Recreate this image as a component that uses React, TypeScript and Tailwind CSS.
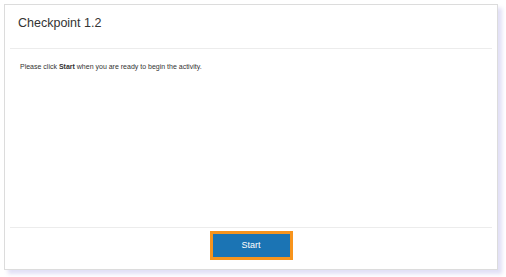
import React from "react";

export default function App() {
  return (
    <div className="w-[506px] h-[277px] bg-white pt-[4px] pl-[4px]" style={{ fontFamily: '"Liberation Sans", Arial, sans-serif' }}>
      <div className="w-[494px] h-[266px] border border-[#dcdcdc] bg-white shadow-[4px_4px_4px_rgba(120,110,210,0.22)] flex flex-col">
        <div className="h-[43px] pt-[11px] pl-[13px]">
          <h1 className="text-[12.5px] leading-[15px] text-[#333]">Checkpoint 1.2</h1>
        </div>
        <div className="mx-[5px] h-px bg-[#ececec]" />
        <div className="flex-1 pt-[14px] pl-[15px]">
          <p className="text-[7px] leading-[8px] text-[#333]">
            Please click <b>Start</b> when you are ready to begin the activity.
          </p>
        </div>
        <div className="mx-[5px] h-px bg-[#ececec]" />
        <div className="h-[41px] pt-[3px] flex justify-center">
          <button className="w-[83px] h-[29px] border-[3px] border-[#f7941d] bg-[#1b74b4] text-white text-[9px] leading-none flex items-center justify-center">
            Start
          </button>
        </div>
      </div>
    </div>
  );
}
